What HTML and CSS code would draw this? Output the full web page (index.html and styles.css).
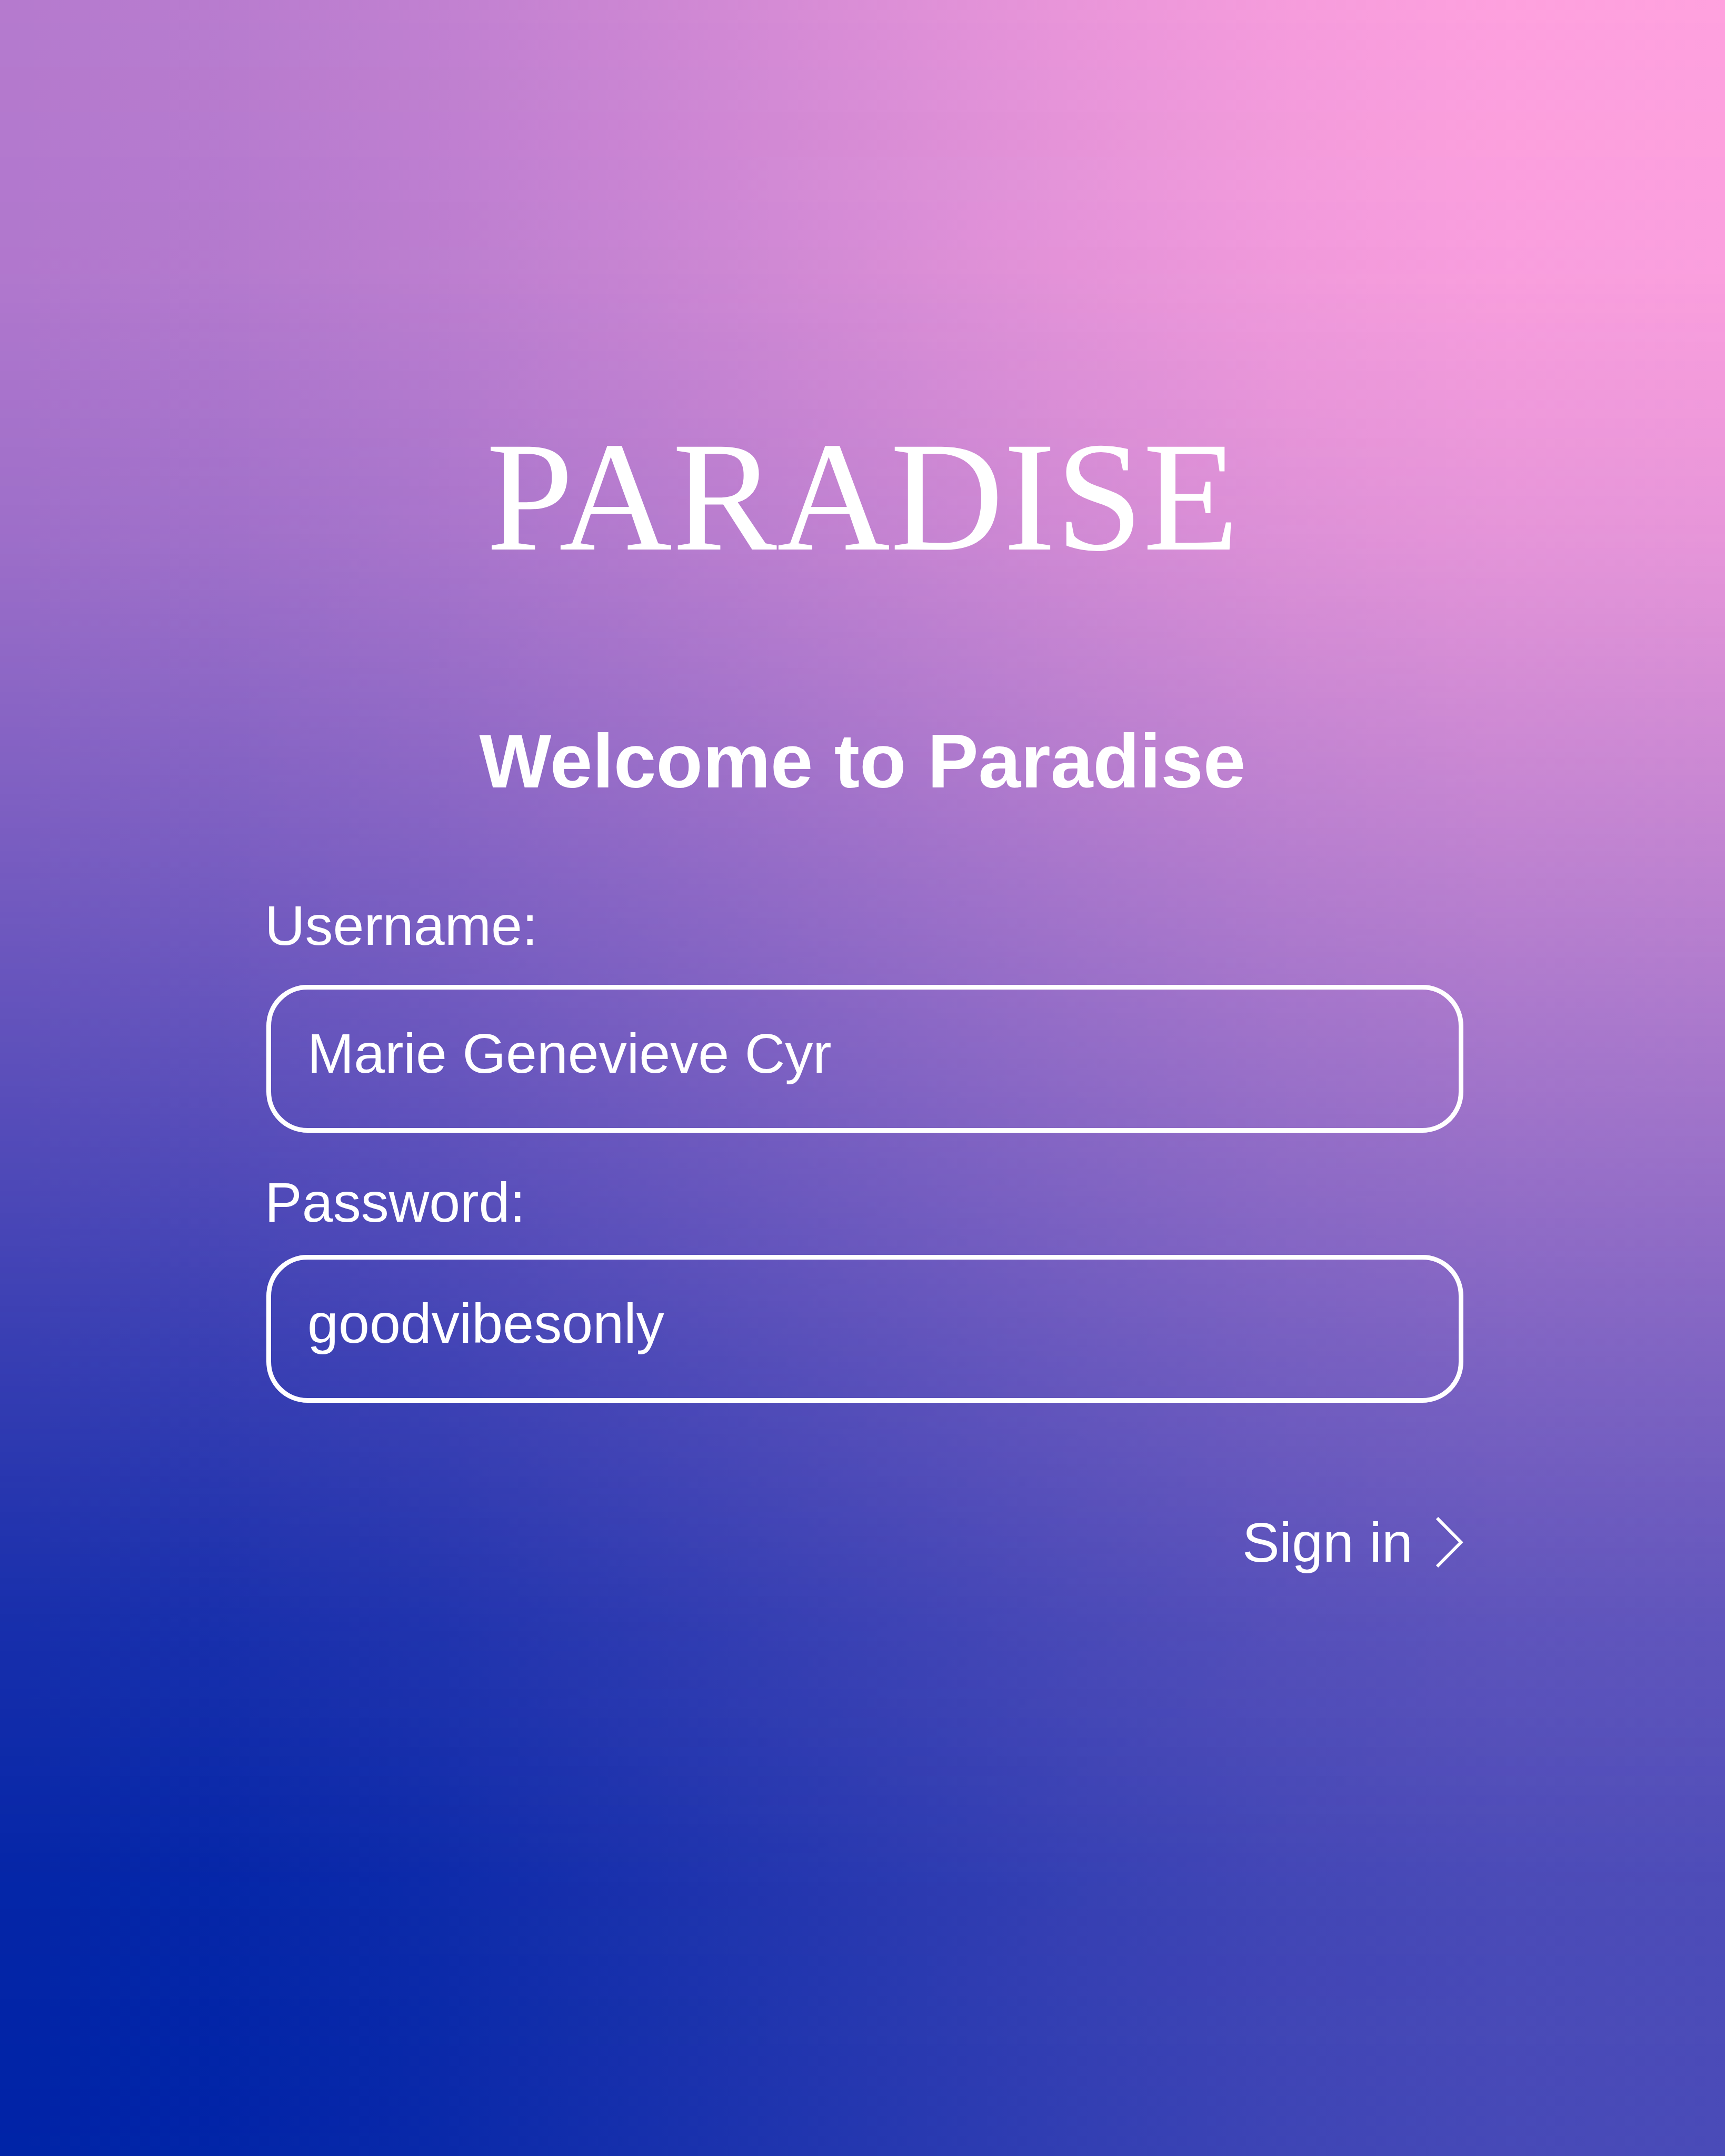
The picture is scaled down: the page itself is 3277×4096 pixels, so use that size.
FILE: index.html
```html
<!DOCTYPE html>
<html lang="en">
<head>
<meta charset="utf-8">
<meta name="viewport" content="width=device-width, initial-scale=1">
<title>Paradise – Sign in</title>
<link rel="stylesheet" href="styles.css">
</head>
<body>
<div class="page">
  <div class="sky sky-lower"></div>
  <div class="sky sky-upper"></div>
  <main class="login">
    <div class="brand">PARADISE</div>
    <h1 class="welcome">Welcome to Paradise</h1>
    <form class="form">
      <label class="label" for="username">Username:</label>
      <input class="input input-username" id="username" type="text" value="Marie Genevieve Cyr">
      <label class="label" for="password">Password:</label>
      <input class="input input-password" id="password" type="text" value="goodvibesonly">
      <button class="submit" type="button">
        <span>Sign in</span>
        <svg class="chevron" viewBox="0 0 52 96" aria-hidden="true"><path d="M2 2 L47.500 48 L2 94"/></svg>
      </button>
    </form>
  </main>
</div>
</body>
</html>
```

FILE: styles.css
```css
* { box-sizing: border-box; }

body {
  margin: 0;
  color: #fff;
  font-family: "Liberation Sans", Arial, sans-serif;
}

.page {
  display: grid;
  min-height: 100vh;
}

.sky, .login { grid-area: 1 / 1; min-width: 0; }

/* Four corner colours, eased into each other along both axes. */
.sky-lower {
  background:
    linear-gradient(to right,
      rgb(74 75 184 / 0),
      rgb(74 75 184 / 0.02) 12.5%,
      rgb(74 75 184 / 0.12) 25%,
      rgb(74 75 184 / 0.3) 37.5%,
      rgb(74 75 184 / 0.49) 50%,
      rgb(74 75 184 / 0.68) 62.5%,
      rgb(74 75 184 / 0.844) 75%,
      rgb(74 75 184 / 0.957) 87.5%,
      rgb(74 75 184 / 1)),
    #0024a7;
}

.sky-upper {
  background:
    linear-gradient(to right,
      rgb(255 161 222 / 0),
      rgb(255 161 222 / 0.043) 12.5%,
      rgb(255 161 222 / 0.156) 25%,
      rgb(255 161 222 / 0.32) 37.5%,
      rgb(255 161 222 / 0.51) 50%,
      rgb(255 161 222 / 0.71) 62.5%,
      rgb(255 161 222 / 0.88) 75%,
      rgb(255 161 222 / 0.985) 87.5%,
      rgb(255 161 222 / 1)),
    #b57ace;
  mask-image: linear-gradient(to bottom,
    rgb(0 0 0 / 1),
    rgb(0 0 0 / 0.975) 12.5%,
    rgb(0 0 0 / 0.865) 25%,
    rgb(0 0 0 / 0.69) 37.5%,
    rgb(0 0 0 / 0.5) 50%,
    rgb(0 0 0 / 0.31) 62.5%,
    rgb(0 0 0 / 0.135) 75%,
    rgb(0 0 0 / 0.025) 87.5%,
    rgb(0 0 0 / 0));
}

.login {
  z-index: 1;
  display: flex;
  flex-direction: column;
  padding-top: 783px;
}

.brand {
  font-family: "Liberation Serif", "Times New Roman", serif;
  font-size: 298px;
  line-height: 320px;
  text-align: center;
}

.welcome {
  margin: 259px 0 166px;
  font-size: 145px;
  line-height: 168px;
  text-align: center;
}

.form {
  display: flex;
  flex-direction: column;
  margin: 0 497px 0 503px;
  font-size: 106px;
  line-height: 124px;
}

.input {
  height: 281px;
  margin-left: 3px;
  padding: 0 69px 20px;
  border: 9px solid #fff;
  border-radius: 78px;
  background: none;
  color: inherit;
  font: inherit;
  outline: none;
}

.input-username { margin-top: 51px; margin-bottom: 70px; }
.input-password { margin-top: 38px; margin-bottom: 203px; }

.submit {
  display: flex;
  align-items: center;
  align-self: flex-end;
  gap: 44px;
  padding: 0;
  border: 0;
  background: none;
  color: inherit;
  font: inherit;
  cursor: pointer;
}

.chevron {
  width: 52px;
  height: 96px;
  fill: none;
  stroke: #fff;
  stroke-width: 6;
}
```
